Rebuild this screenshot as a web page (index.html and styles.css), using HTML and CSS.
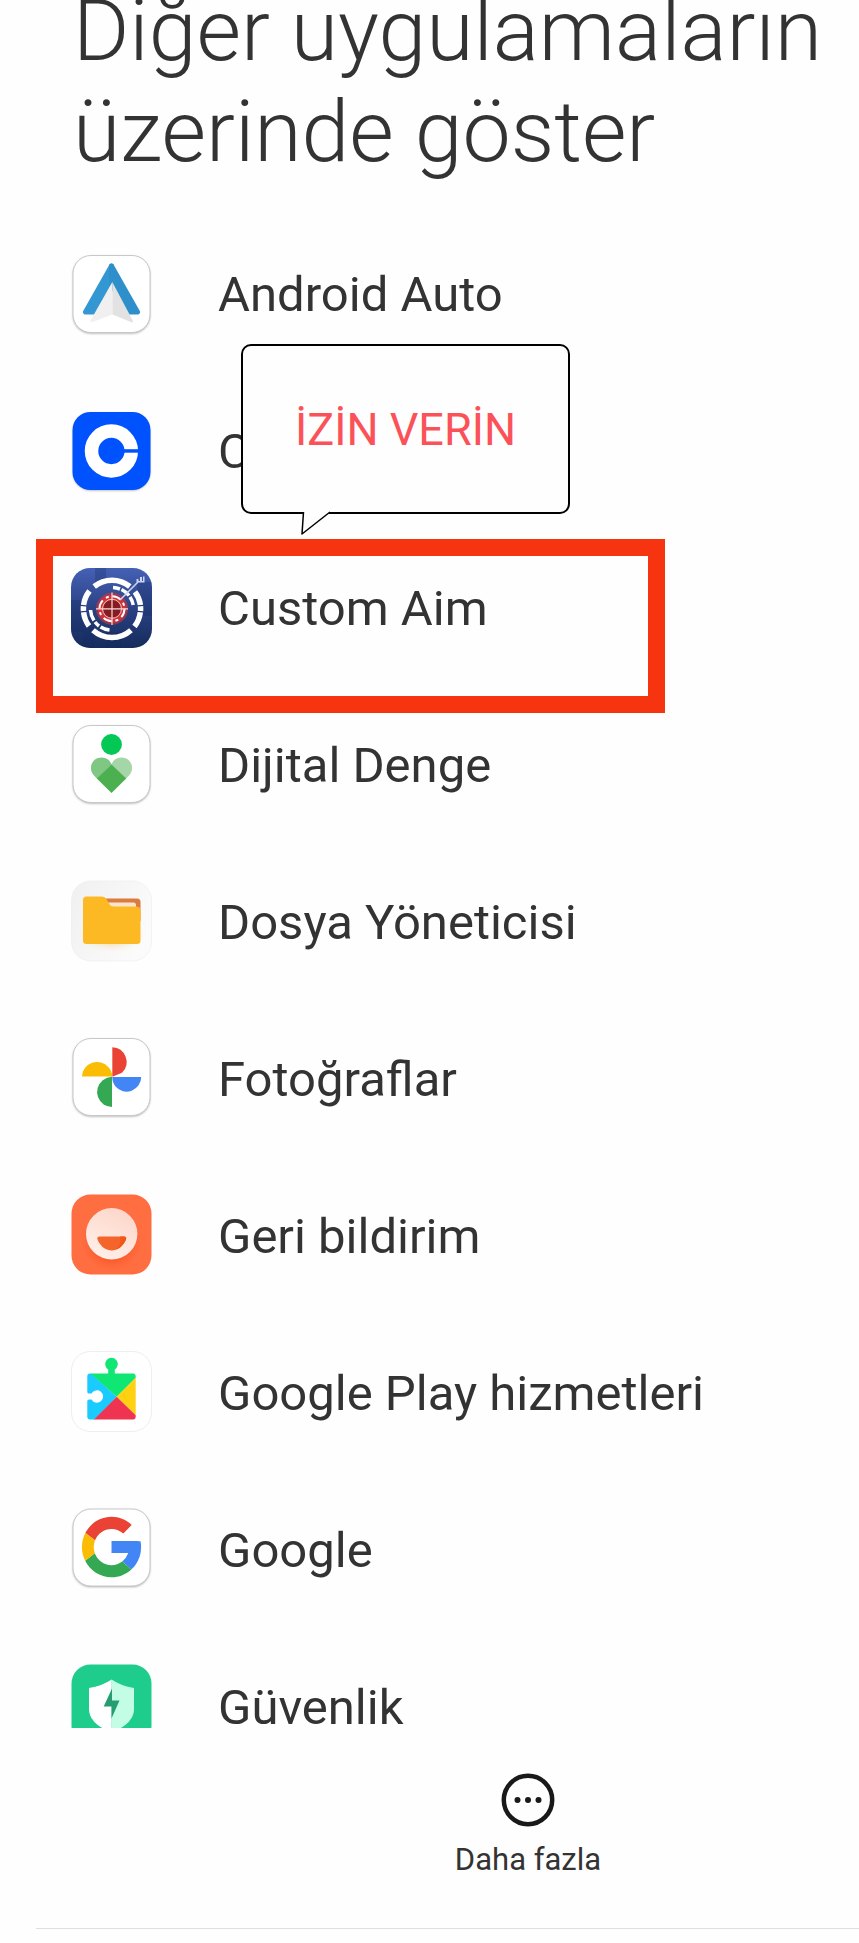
FILE: index.html
```html
<!DOCTYPE html>
<html lang="tr">
<head>
<meta charset="utf-8">
<meta name="viewport" content="width=device-width, initial-scale=1">
<title>Diğer uygulamaların üzerinde göster</title>
<link rel="stylesheet" href="styles.css">
</head>
<body>
<div class="screen">
  <h1 class="title">Diğer uygulamaların üzerinde göster</h1>

  <ul class="apps">
    <li class="app">
      <a class="app-link" href="#android-auto">
        <svg class="icon" viewBox="0 0 81 81" aria-hidden="true">
          <rect class="tile-shadow" x="2" y="3.500" width="77" height="77" rx="18"/>
          <rect class="tile" x="2" y="2.500" width="77" height="77" rx="18"/>
          <path d="M40.500 13 14.500 59H26L41 32Z" fill="#3297d3" stroke="#3297d3" stroke-width="5" stroke-linejoin="round"/>
          <path d="M40.500 13 66.500 59H56L41 32Z" fill="#2f8fca" stroke="#2f8fca" stroke-width="5" stroke-linejoin="round"/>
          <path d="M41.300 29 62 68q.5 2-1.500 1.300L41.300 61.500Z" fill="#e2e2e2"/>
          <path d="M41.300 29 19.500 67.500q-.5 2.300 1.500 1.700L41.300 61.500Z" fill="#f0f0f0"/>
        </svg>
        <span class="label">Android Auto</span>
      </a>
    </li>

    <li class="app">
      <a class="app-link" href="#coinbase">
        <svg class="icon" viewBox="0 0 81 81" aria-hidden="true">
          <rect class="tile-shadow" x="2" y="3.500" width="77" height="77" rx="18"/>
          <rect x="1.500" y="2" width="78" height="78" rx="18" fill="#0052ff"/>
          <circle cx="40.400" cy="41" r="19.900" fill="none" stroke="#fff" stroke-width="13.500"/>
          <path d="M51 39.200h18v3.500H51Z" fill="#0052ff"/>
        </svg>
        <span class="label">Coinbase</span>
      </a>
      <div class="callout" role="note">
        <span>İZİN VERİN</span>
        <svg class="callout-tail" viewBox="0 0 30 24" aria-hidden="true">
          <path d="M2 0H29V1.500L1 23Z" fill="#fefefe"/>
          <path d="M2.500 1 1 23 29 1" fill="none" stroke="#000" stroke-width="1.500" stroke-linejoin="round"/>
        </svg>
      </div>
    </li>

    <li class="app highlighted">
      <a class="app-link" href="#custom-aim">
        <svg class="icon" viewBox="0 0 81 81" aria-hidden="true">
          <defs>
            <linearGradient id="aim" x1="0" y1="0" x2="0" y2="1">
              <stop offset="0" stop-color="#4561b5"/>
              <stop offset=".55" stop-color="#293f80"/>
              <stop offset="1" stop-color="#152c5c"/>
            </linearGradient>
            <clipPath id="aim-clip"><rect width="81" height="80" rx="19"/></clipPath>
          </defs>
          <g transform="translate(0 1)">
          <rect width="81" height="80" rx="19" fill="url(#aim)"/>
          <g clip-path="url(#aim-clip)" fill="#122a61" opacity=".28">
            <path d="M0 32h12v32H0ZM12 50h12v31H12ZM24 0h11v14H24ZM66 14h15v34H66ZM35 64h16v17H35Z"/>
          </g>
          <g fill="none" stroke="#fff">
            <g stroke-width="5.500">
              <path d="M23.200 18.500A28.500 28.500 0 0 1 58.800 18.500"/>
              <path d="M64 23.800A28.500 28.500 0 0 1 69.400 37M69.500 38.300A28.500 28.500 0 0 1 69.500 43M69.300 44.300A28.500 28.500 0 0 1 63.500 58.500"/>
              <path d="M60 62.200A28.500 28.500 0 0 1 22 62.200"/>
              <path d="M18 58A28.500 28.500 0 0 1 12.600 44.300M12.500 43A28.500 28.500 0 0 1 12.500 38.300M12.600 37A28.500 28.500 0 0 1 18.500 23"/>
            </g>
            <path d="M42 19.500A21.500 21.500 0 0 1 49 21M50.500 21.500A21.500 21.500 0 0 1 58 27.500M59 29A21.500 21.500 0 0 1 62.200 37" stroke-width="3.500"/>
            <path d="M19.500 42A21.500 21.500 0 0 0 23 52.500M24 54A21.500 21.500 0 0 0 28 58M29.500 59A21.500 21.500 0 0 0 38.500 62" stroke-width="3.500"/>
          </g>
          <circle cx="41" cy="40.800" r="16" fill="#c4353d" opacity=".65"/>
          <circle cx="41" cy="40.800" r="14" fill="#cd353a"/>
          <circle cx="41" cy="40.800" r="9" fill="#851c21"/>
          <circle cx="41" cy="40.800" r="12.500" fill="none" stroke="#fff" stroke-width="2" stroke-dasharray="9 4 3 3.600"/>
          <circle cx="41" cy="40.800" r="9.500" fill="none" stroke="#f4bfc1" stroke-width="1"/>
          <path d="M41 24.500V57M25 40.800H57" stroke="#fbdada" stroke-width="1.200"/>
          <path d="M49 32 67 14" stroke="#c9d5f2" stroke-width="1.600"/>
          <path d="M65.500 14.500V11H67.500V13H69V9H71V13H72V8.500H73.500V14.500Z" fill="#c9d5f2"/>
          </g>
        </svg>
        <span class="label">Custom Aim</span>
      </a>
    </li>

    <li class="app">
      <a class="app-link" href="#dijital-denge">
        <svg class="icon" viewBox="0 0 81 81" aria-hidden="true">
          <rect class="tile-shadow" x="2" y="2.500" width="77" height="77" rx="18"/>
          <rect class="tile" x="2" y="1.500" width="77" height="77" rx="18"/>
          <circle cx="40.500" cy="20.500" r="10.400" fill="#04c855"/>
          <path d="M40.500 40.300A10.400 10.400 0 0 0 30.500 33.500C21 33.500 16.500 44.500 23 51.500L26 54.800Z" fill="#81c784"/>
          <path d="M40.500 40.300A10.400 10.400 0 0 1 50.500 33.500C60 33.500 64.500 44.500 58 51.500L55 54.800Z" fill="#a5d6a7"/>
          <path d="M40.500 40.300 55.200 54.500 40.500 69 25.800 54.500Z" fill="#4caf50"/>
        </svg>
        <span class="label">Dijital Denge</span>
      </a>
    </li>

    <li class="app">
      <a class="app-link" href="#dosya-yoneticisi">
        <svg class="icon" viewBox="0 0 81 81" aria-hidden="true">
          <defs>
            <linearGradient id="files" x1="0" y1="0" x2="1" y2=".5">
              <stop offset="0" stop-color="#f0f0f0"/>
              <stop offset="1" stop-color="#fbfbfb"/>
            </linearGradient>
            <radialGradient id="files-glow">
              <stop offset=".4" stop-color="#f7dfae"/>
              <stop offset="1" stop-color="#f7f4ec" stop-opacity="0"/>
            </radialGradient>
          </defs>
          <rect x=".5" y="0" width="80" height="80" rx="19" fill="url(#files)" stroke="#ececec" stroke-width=".6"/>
          <ellipse cx="40.500" cy="54" rx="34" ry="18" fill="url(#files-glow)"/>
          <path d="M32 17.500H66Q69.500 17.500 69.500 21V40H36Z" fill="#dc7b3f"/>
          <path d="M37 21.500H62.500Q65 21.500 65 24V32H37Z" fill="#fbe5ca"/>
          <path d="M12 19q0-3.500 3.500-3.500H31q3 0 4.500 2.500L38.500 23.500q1.300 2 4 2H65q4.500 0 4.500 4V59.500q0 3.500-3.500 3.500H15.500Q12 63 12 59.500Z" fill="#fdb924"/>
        </svg>
        <span class="label">Dosya Yöneticisi</span>
      </a>
    </li>

    <li class="app">
      <a class="app-link" href="#fotograflar">
        <svg class="icon" viewBox="0 0 81 81" aria-hidden="true">
          <rect class="tile-shadow" x="2" y="1.500" width="77" height="77" rx="18"/>
          <rect class="tile" x="2" y=".5" width="77" height="77" rx="18"/>
          <path d="M41.300 9.300A14.800 14.800 0 0 1 51 34.800L41.300 38.800Z" fill="#ea4335"/>
          <path d="M11 38.500A15 15 0 0 1 37.500 29.300Q41 33 41.300 38.500Z" fill="#fbbc04"/>
          <path d="M70.200 39A14.600 14.600 0 0 1 44.500 48.500Q41.300 44.500 41.300 39Z" fill="#4285f4"/>
          <path d="M41 69A15 15 0 0 1 31.500 42.500Q36 39 41 38.800Z" fill="#34a853"/>
        </svg>
        <span class="label">Fotoğraflar</span>
      </a>
    </li>

    <li class="app">
      <a class="app-link" href="#geri-bildirim">
        <svg class="icon" viewBox="0 0 81 81" aria-hidden="true">
          <defs>
            <linearGradient id="face" x1=".8" y1="0" x2=".3" y2="1">
              <stop offset="0" stop-color="#fdd5c8"/>
              <stop offset="1" stop-color="#fff0e9"/>
            </linearGradient>
            <radialGradient id="face-glow">
              <stop offset=".5" stop-color="#fa5424"/>
              <stop offset="1" stop-color="#ff6d3f" stop-opacity="0"/>
            </radialGradient>
          </defs>
          <rect x=".5" y="-.5" width="80" height="80" rx="19" fill="#ff6e41"/>
          <circle cx="40.700" cy="46" r="33" fill="url(#face-glow)"/>
          <circle cx="40.700" cy="38.800" r="25.700" fill="url(#face)"/>
          <path d="M28 41.500H53.500Q56 42 54.800 45C48.500 59 33 59 26.700 45Q25.500 42 28 41.500Z" fill="#f5642b"/>
          <path d="M49 41.500H53.500Q56 42 54.800 45C52.500 50 49 53 45 54.500 49 50.500 50.500 46 49 41.500Z" fill="#f15716"/>
        </svg>
        <span class="label">Geri bildirim</span>
      </a>
    </li>

    <li class="app">
      <a class="app-link" href="#google-play">
        <svg class="icon" viewBox="0 0 81 81" aria-hidden="true">
          <defs>
            <clipPath id="play-clip"><path d="M19 21.500H37.200V17.500A6.300 6.300 0 1 1 43.800 17.500V21.500H62Q64.700 21.500 64.700 24.500V64.500Q64.700 67.500 62 67.500H19Q16.300 67.500 16.300 64.500V49Q16.300 47.500 18 47.500H20.500A6.200 6.200 0 1 0 20.500 41.500H18Q16.300 41.500 16.300 40V24.500Q16.300 21.500 19 21.500Z"/></clipPath>
          </defs>
          <rect x=".5" y="-.5" width="80" height="80" rx="19" fill="#fff" stroke="#e7e7e7" stroke-width=".7"/>
          <g clip-path="url(#play-clip)">
            <path d="M16 17.800 45.700 44.800 22.500 69H16Z" fill="#1acbff"/>
            <path d="M19.500 21.500V5H62L66 24.500 45.700 44.800Z" fill="#0fe673"/>
            <path d="M66 24.500V64.500L45.700 44.800Z" fill="#ffd110"/>
            <path d="M45.700 44.800 66 64.500V68H22.500Z" fill="#ee3450"/>
          </g>
        </svg>
        <span class="label">Google Play hizmetleri</span>
      </a>
    </li>

    <li class="app">
      <a class="app-link" href="#google">
        <svg class="icon" viewBox="0 0 81 81" aria-hidden="true">
          <rect class="tile-shadow" x="2" y="1" width="77" height="77" rx="18"/>
          <rect class="tile" x="2" y="0" width="77" height="77" rx="18"/>
          <g transform="translate(5 1.800) scale(1.480 1.510)">
            <path fill="#4285f4" d="M43.611 20.083H42V20H24v8h11.303a12.040 12.040 0 0 1-4.087 5.571l6.190 5.238C36.971 39.205 44 34 44 24c0-1.341-.138-2.650-.389-3.917z"/>
            <path fill="#ea4335" d="m6.306 14.691 6.571 4.819C14.655 15.108 18.961 12 24 12c3.059 0 5.842 1.154 7.961 3.039l5.657-5.657C34.046 6.053 29.268 4 24 4 16.318 4 9.656 8.337 6.306 14.691z"/>
            <path fill="#34a853" d="M24 44c5.166 0 9.860-1.977 13.409-5.192l-6.190-5.238A11.910 11.910 0 0 1 24 36c-5.202 0-9.619-3.317-11.283-7.946l-6.522 5.025C9.505 39.556 16.227 44 24 44z"/>
            <path fill="#fbbc05" d="M6.306 14.691A19.900 19.900 0 0 0 4 24c0 3.250.8 6.350 2.195 9.079l6.522-5.025A12 12 0 0 1 12.877 19.510z"/>
          </g>
        </svg>
        <span class="label">Google</span>
      </a>
    </li>

    <li class="app">
      <a class="app-link" href="#guvenlik">
        <svg class="icon" viewBox="0 0 81 81" aria-hidden="true">
          <rect x=".5" y="-1.500" width="80" height="80" rx="19" fill="#1ecc8c"/>
          <path d="M40.700 13.500Q31 20 18 22V43C18 54 28 62 40.700 66Z" fill="#fff"/>
          <path d="M40.700 13.500Q50 20 63 22V43C63 54 53 62 40.700 66Z" fill="#c3fde6"/>
          <path d="M41 22.500 32.700 40.500H40.500V52.500L48.500 34.500H41Z" fill="#259d70"/>
        </svg>
        <span class="label">Güvenlik</span>
      </a>
    </li>
  </ul>

  <footer class="bottom">
    <button class="more" type="button">
      <svg class="more-icon" viewBox="0 0 54 54" aria-hidden="true">
        <circle cx="27" cy="27" r="24.200" fill="none" stroke="#191919" stroke-width="4.500"/>
        <circle cx="16.500" cy="27" r="3" fill="#191919"/>
        <circle cx="27" cy="27" r="3" fill="#191919"/>
        <circle cx="37.500" cy="27" r="3" fill="#191919"/>
      </svg>
      <span>Daha fazla</span>
    </button>
  </footer>
</div>
</body>
</html>
```
FILE: styles.css
```css
*,
*::before,
*::after {
  box-sizing: border-box;
}

body {
  margin: 0;
  background: #fefefe;
  color: #333;
  font-family: Roboto, "Liberation Sans", sans-serif;
}

.screen {
  display: flex;
  flex-direction: column;
  height: 100vh;
  overflow: hidden;
}

/* The heading is partly scrolled off the top edge. */
.title {
  flex: none;
  margin: -20px 0 0;
  padding: 0 24px 33px 73px;
  font-size: 86px;
  font-weight: 300;
  line-height: 101px;
}

.apps {
  flex: 1 1 0;
  min-height: 0;
  margin: 0;
  padding: 0;
  overflow: hidden;
  list-style: none;
}

.app {
  position: relative;
}

.app-link {
  display: flex;
  align-items: center;
  gap: 66px;
  height: 157px;
  padding: 0 36px 0 71px;
  color: inherit;
  text-decoration: none;
}

.icon {
  flex: none;
  width: 81px;
  height: 81px;
  overflow: visible;
}

.tile {
  fill: #fff;
  stroke: #c8c8c8;
  stroke-width: 1px;
}

.tile-shadow {
  fill: #aaa;
  filter: blur(1px);
}

.label {
  padding-top: 3px;
  font-size: 49px;
  line-height: 56px;
  white-space: nowrap;
}

/* Frame laid over the row the user has to pick. */
.highlighted::after {
  content: "";
  position: absolute;
  top: 10px;
  left: 36px;
  width: 629px;
  height: 174px;
  border: 17px solid #f63410;
  pointer-events: none;
}

.callout {
  position: absolute;
  top: -28px;
  left: 241px;
  z-index: 1;
  display: flex;
  align-items: center;
  justify-content: center;
  width: 329px;
  height: 170px;
  padding-top: 2px;
  border: 2px solid #000;
  border-radius: 10px;
  background: #fefefe;
  color: #fb5259;
  font-size: 45px;
  line-height: 54px;
}

.callout-tail {
  position: absolute;
  top: 100%;
  left: 58px;
  width: 30px;
  height: 24px;
  margin-top: -1px;
}

.bottom {
  position: relative;
  display: flex;
  flex: none;
  justify-content: center;
  height: 215px;
  padding: 45px 0 0 197px;
}

.bottom::after {
  content: "";
  position: absolute;
  right: 0;
  bottom: 14px;
  left: 36px;
  height: 1px;
  background: #dfdfdf;
}

.more {
  display: flex;
  flex-direction: column;
  align-items: center;
  align-self: flex-start;
  gap: 14px;
  padding: 0;
  border: 0;
  background: none;
  color: #333;
  font: 31px/38px Roboto, "Liberation Sans", sans-serif;
}

.more-icon {
  width: 54px;
  height: 54px;
}
```
